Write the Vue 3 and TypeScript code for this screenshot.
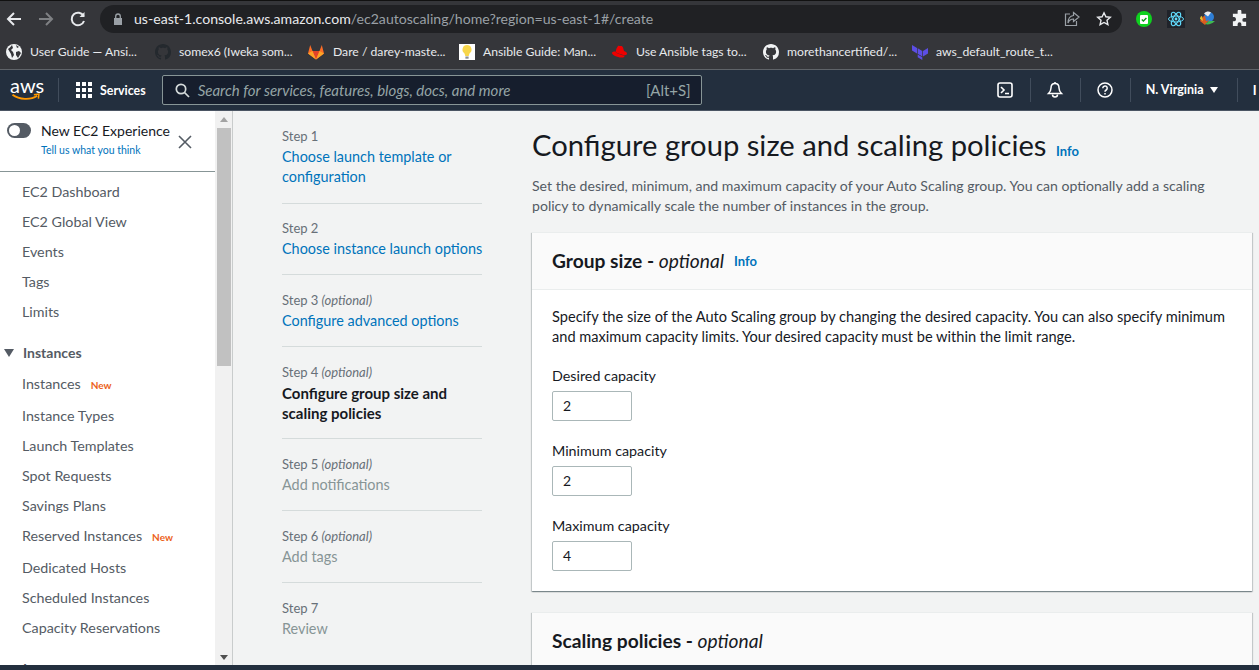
<script setup lang="ts">
interface NavItem {
  label: string
  isNew?: boolean
}

interface Step {
  step: string
  optional?: boolean
  lines: string[]
  state: 'link' | 'current' | 'disabled'
}

interface Field {
  label: string
  value: string
}

const bookmarks = [
  { icon: 'globe', label: 'User Guide — Ansi...', width: 149 },
  { icon: 'github-dark', label: 'somex6 (Iweka som...', width: 152 },
  { icon: 'gitlab', label: 'Dare / darey-maste...', width: 152 },
  { icon: 'bulb', label: 'Ansible Guide: Man...', width: 153 },
  { icon: 'redhat', label: 'Use Ansible tags to...', width: 151 },
  { icon: 'github', label: 'morethancertified/...', width: 149 },
  { icon: 'terraform', label: 'aws_default_route_t...', width: 150 },
]

const topNav: NavItem[] = [
  { label: 'EC2 Dashboard' },
  { label: 'EC2 Global View' },
  { label: 'Events' },
  { label: 'Tags' },
  { label: 'Limits' },
]

const instanceNav: NavItem[] = [
  { label: 'Instances', isNew: true },
  { label: 'Instance Types' },
  { label: 'Launch Templates' },
  { label: 'Spot Requests' },
  { label: 'Savings Plans' },
  { label: 'Reserved Instances', isNew: true },
  { label: 'Dedicated Hosts' },
  { label: 'Scheduled Instances' },
  { label: 'Capacity Reservations' },
]

const steps: Step[] = [
  { step: 'Step 1', lines: ['Choose launch template or', 'configuration'], state: 'link' },
  { step: 'Step 2', lines: ['Choose instance launch options'], state: 'link' },
  { step: 'Step 3', optional: true, lines: ['Configure advanced options'], state: 'link' },
  { step: 'Step 4', optional: true, lines: ['Configure group size and', 'scaling policies'], state: 'current' },
  { step: 'Step 5', optional: true, lines: ['Add notifications'], state: 'disabled' },
  { step: 'Step 6', optional: true, lines: ['Add tags'], state: 'disabled' },
  { step: 'Step 7', lines: ['Review'], state: 'disabled' },
]

const fields: Field[] = [
  { label: 'Desired capacity', value: '2' },
  { label: 'Minimum capacity', value: '2' },
  { label: 'Maximum capacity', value: '4' },
]
</script>

<template>
  <div class="page">
    <div class="chrome-top">
      <svg class="tb-icon" width="18" height="18" viewBox="0 0 18 18" fill="none" stroke="#e8eaed" stroke-width="2"><path d="M16 9H3M9 3 3 9l6 6" /></svg>
      <svg class="tb-icon" width="18" height="18" viewBox="0 0 18 18" fill="none" stroke="#7f8184" stroke-width="2"><path d="M2 9h13M9 3l6 6-6 6" /></svg>
      <svg class="tb-icon" width="18" height="18" viewBox="0 0 18 18" fill="none" stroke="#e8eaed" stroke-width="2"><path d="M14.6 6A6.3 6.3 0 1 0 15 11" /><path d="M15.5 2v5h-5" fill="#e8eaed" stroke="none" /></svg>
      <div class="omnibox">
        <svg width="10" height="12" viewBox="0 0 10 12" class="lock"><path d="M1 5h8v7H1z" fill="#9aa0a6" /><path d="M2.7 5V3.3a2.3 2.3 0 0 1 4.6 0V5" fill="none" stroke="#9aa0a6" stroke-width="1.3" /></svg>
        <span class="url"><b>us-east-1.console.aws.amazon.com</b>/ec2autoscaling/home?region=us-east-1#/create</span>
        <svg class="share" width="16" height="16" viewBox="0 0 16 16" fill="none" stroke="#9aa0a6" stroke-width="1.2"><path d="M6 3H1.5v11.5h11V10" /><path d="M9.5 1.5 15 6l-5.500 4.500V8C7 8 5 9.500 4 12c0-4 2-7 5.500-7.500z" /></svg>
        <svg width="16" height="16" viewBox="0 0 16 16" fill="none" stroke="#e8eaed" stroke-width="1.4"><path d="m8 1.800 1.900 4 4.400.5-3.300 3 .9 4.400L8 11.500l-3.900 2.200.9-4.400-3.300-3 4.400-.5z" /></svg>
      </div>
      <div class="exts">
        <svg width="18" height="18" viewBox="0 0 18 18"><circle cx="9" cy="9" r="8" fill="#0fd11f" /><rect x="5" y="5" width="8" height="9" rx="1" fill="#fff" /><path d="M6.800 9.500 8.400 11l3-3" stroke="#0a9c18" stroke-width="1.400" fill="none" /></svg>
        <svg width="18" height="18" viewBox="0 0 18 18" fill="none" stroke="#61dafb" stroke-width="1"><rect width="18" height="18" fill="#20232a" stroke="none" /><ellipse cx="9" cy="9" rx="7.500" ry="3" /><ellipse cx="9" cy="9" rx="7.500" ry="3" transform="rotate(60 9 9)" /><ellipse cx="9" cy="9" rx="7.500" ry="3" transform="rotate(120 9 9)" /><circle cx="9" cy="9" r="1.400" fill="#61dafb" stroke="none" /></svg>
        <svg width="18" height="18" viewBox="0 0 18 18"><circle cx="10" cy="7" r="5" fill="#2f7fd6" /><path d="M5 3.500a5 5 0 0 1 7-1l-3 4z" fill="#e8eaed" /><path d="M1 11c2-3 3-5 5-5l1 5 3-1-4 5z" fill="#dc5b20" /><path d="M6 14c3 1 7 0 10-3l-6 0z" fill="#3fb950" /><path d="M1 9c0-2 1-3 2-3l1 5z" fill="#e6c229" /></svg>
        <svg width="17" height="17" viewBox="0 0 18 18"><path d="M7 1.500a2 2 0 0 1 4 0V4h5v4.500h-2a2 2 0 0 0 0 4h2V17h-5v-2a2 2 0 0 0-4 0v2H2v-5h1.500a2.300 2.300 0 0 0 0-4.500H2V4h5z" fill="#f1f3f4" /></svg>
      </div>
    </div>

    <div class="bookmarks">
      <div v-for="b in bookmarks" :key="b.label" class="bookmark" :style="{ width: b.width + 'px' }">
        <svg v-if="b.icon === 'globe'" width="16" height="16" viewBox="0 0 16 16"><circle cx="8" cy="8" r="8" fill="#f1f3f4" /><path d="M2 5c2-1 3-3 4-4l1 3-2 2 2 2 1 3-2 3-1-4zM10 8l3-1 2 2-3 5-2-3zM10 1l3 2-2 1z" fill="#35363a" /></svg>
        <svg v-else-if="b.icon === 'github-dark' || b.icon === 'github'" width="16" height="16" viewBox="0 0 16 16"><path :fill="b.icon === 'github' ? '#f1f3f4' : '#24292e'" fill-rule="evenodd" d="M8 0C3.580 0 0 3.580 0 8c0 3.540 2.290 6.530 5.470 7.590.4.070.55-.17.55-.38 0-.19-.010-.82-.010-1.490-2.010.37-2.530-.49-2.690-.94-.090-.23-.48-.94-.82-1.130-.28-.15-.68-.52-.010-.53.63-.010 1.080.58 1.230.82.720 1.210 1.870.87 2.330.66.070-.52.28-.87.51-1.070-1.780-.2-3.640-.89-3.640-3.950 0-.87.310-1.590.82-2.150-.080-.2-.36-1.020.080-2.120 0 0 .67-.21 2.200.82.640-.18 1.320-.27 2-.27s1.360.090 2 .27c1.530-1.040 2.200-.82 2.200-.82.440 1.100.160 1.920.080 2.120.51.560.82 1.270.82 2.150 0 3.070-1.870 3.750-3.650 3.950.290.25.540.73.540 1.480 0 1.070-.010 1.930-.010 2.200 0 .21.150.46.550.38A8.010 8.010 0 0 0 16 8c0-4.420-3.580-8-8-8z" /></svg>
        <svg v-else-if="b.icon === 'gitlab'" width="18" height="16" viewBox="0 0 18 16"><path d="M9 15.500 1 9.500 3.200 1l2.300 6h7L14.800 1 17 9.500z" fill="#fc6d26" /><path d="M9 15.500 5.500 7h7z" fill="#e24329" /><path d="M9 15.500 1 9.500 5.500 7zM9 15.500l8-6L12.500 7z" fill="#fca326" /></svg>
        <svg v-else-if="b.icon === 'bulb'" width="16" height="16" viewBox="0 0 16 16"><rect width="16" height="16" fill="#fff" /><path d="M8 1a4.600 4.600 0 0 0-2.500 8.400L6.300 12h3.400l.8-2.600A4.600 4.600 0 0 0 8 1z" fill="#f7d64a" /><rect x="6.400" y="12.500" width="3.200" height="2.200" fill="#8b8f94" /></svg>
        <svg v-else-if="b.icon === 'redhat'" width="16" height="16" viewBox="0 0 16 16"><path d="M4.500 4.500 6 2c1-.6 1.500 0 2.500 0 1.200-.4 2 .2 2.500 1.500l1 3.500c1.500.6 3 1.500 3 2.700 0 1.300-1.800 1.800-4 1.200C8.500 10.200 5.500 9.500 3.500 8z" fill="#e00" /><path d="M3 7.500C1.500 7.500 0 8 0 9c0 2 5 4.500 9.500 4.500 2.500 0 3.300-1 3-1.800C8.500 11 5 9.500 3 7.500z" fill="#e00" /></svg>
        <svg v-else width="16" height="16" viewBox="0 0 16 16"><path d="M0 1l5 3v5.500L0 6.500zM5.700 4.300 10.300 7v5.500L5.700 9.800zM11 7l5-3v5.500l-5 3zM5.700 10.500l4.600 2.700V16l-4.600-2.700z" fill="#5c4ee5" /></svg>
        <span>{{ b.label }}</span>
      </div>
    </div>

    <header class="aws-nav">
      <div class="aws-logo">
        <span class="aws-word">aws</span>
        <svg width="32" height="9" viewBox="0 0 26 8" fill="none"><path d="M1 1.500C7 6 17 6.500 23 2.500" stroke="#ff9900" stroke-width="1.600" /><path d="M20 1.500 24.500 1 24 5" stroke="#ff9900" stroke-width="1.300" /></svg>
      </div>
      <div class="services">
        <svg width="16" height="16" viewBox="0 0 16 16" fill="#fff"><rect width="4" height="4" /><rect x="6" width="4" height="4" /><rect x="12" width="4" height="4" /><rect y="6" width="4" height="4" /><rect x="6" y="6" width="4" height="4" /><rect x="12" y="6" width="4" height="4" /><rect y="12" width="4" height="4" /><rect x="6" y="12" width="4" height="4" /><rect x="12" y="12" width="4" height="4" /></svg>
        <span>Services</span>
      </div>
      <div class="search">
        <svg width="15" height="15" viewBox="0 0 15 15" fill="none" stroke="#d5dbdb" stroke-width="1.700"><circle cx="6" cy="6" r="4.700" /><path d="m9.500 9.500 4.500 4.500" /></svg>
        <span class="search-text">Search for services, features, blogs, docs, and more</span>
        <span class="search-key">[Alt+S]</span>
      </div>
      <div class="nav-right">
        <div class="nav-btn">
          <svg width="16" height="16" viewBox="0 0 16 16" fill="none" stroke="#fff" stroke-width="1.600"><rect x="1" y="1" width="14" height="14" rx="2" /><path d="m4 5 3 3-3 3M8 11.500h4" /></svg>
        </div>
        <div class="nav-btn">
          <svg width="18" height="18" viewBox="0 0 18 18" fill="none" stroke="#fff" stroke-width="1.500"><path d="M9 2.500c-3 0-4 2-4 4.500 0 2.500-1 4-2.500 5.500h13C14 11 13 9.500 13 7c0-2.500-1-4.500-4-4.500z" /><path d="M9 1v1.500M6.500 13.500a2.500 2.500 0 0 0 5 0" /></svg>
        </div>
        <div class="nav-btn">
          <svg width="16" height="16" viewBox="0 0 16 16" fill="none" stroke="#fff" stroke-width="1.500"><circle cx="8" cy="8" r="7" /><path d="M5.800 6.200a2.200 2.200 0 1 1 3.400 1.800c-.8.500-1.200 1-1.200 1.800" /><path d="M8 11v1.500" /></svg>
        </div>
        <div class="region">N. Virginia <i class="caret-white"></i></div>
        <div class="user">I</div>
      </div>
    </header>

    <div class="body">
      <aside class="sidebar">
        <div class="side-scroll">
          <div class="experience">
            <span class="toggle"><i></i></span>
            <div class="exp-text">
              <div class="exp-title">New EC2 Experience</div>
              <div class="exp-link">Tell us what you think</div>
            </div>
            <svg class="exp-close" width="14" height="14" viewBox="0 0 14 14" fill="none" stroke="#545b64" stroke-width="1.600"><path d="m1 1 12 12M13 1 1 13" /></svg>
          </div>
          <nav class="side-nav">
            <div class="nav-group">
              <div v-for="n in topNav" :key="n.label" class="nav-item">{{ n.label }}</div>
            </div>
            <div class="nav-head"><i class="caret-dark"></i>Instances</div>
            <div v-for="n in instanceNav" :key="n.label" :class="['nav-item', { tall: n.isNew }]">
              {{ n.label }}<span v-if="n.isNew" class="new">New</span>
            </div>
            <div class="nav-head cut"><i class="caret-dark"></i>Images</div>
          </nav>
        </div>
        <div class="scrollbar">
          <i class="sb-up"></i>
          <div class="sb-thumb"></div>
          <i class="sb-down"></i>
        </div>
      </aside>

      <main class="content">
        <ol class="steps">
          <li v-for="s in steps" :key="s.step" class="step">
            <div class="step-no">{{ s.step }}<em v-if="s.optional"> (optional)</em></div>
            <div :class="['step-title', s.state]">
              <div v-for="line in s.lines" :key="line">{{ line }}</div>
            </div>
          </li>
        </ol>

        <section class="form">
          <h1>Configure group size and scaling policies <a class="info big">Info</a></h1>
          <p class="desc">Set the desired, minimum, and maximum capacity of your Auto Scaling group. You can optionally add a scaling<br>policy to dynamically scale the number of instances in the group.</p>

          <div class="card">
            <div class="card-head">
              <h2>Group size - <em>optional</em></h2>
              <a class="info">Info</a>
            </div>
            <div class="card-body">
              <p>Specify the size of the Auto Scaling group by changing the desired capacity. You can also specify minimum<br>and maximum capacity limits. Your desired capacity must be within the limit range.</p>
              <div v-for="f in fields" :key="f.label" class="field">
                <label>{{ f.label }}</label>
                <div class="input">{{ f.value }}</div>
              </div>
            </div>
          </div>

          <div class="card second">
            <div class="card-head">
              <h2>Scaling policies - <em>optional</em></h2>
            </div>
          </div>
        </section>
      </main>
    </div>
    <div class="taskbar"></div>
  </div>
</template>

<style>
html, body {
  margin: 0;
  overflow: hidden;
}
</style>

<style scoped>
.page {
  width: 1259px;
  height: 670px;
  overflow: hidden;
  display: flex;
  flex-direction: column;
  font-family: "Lato", "Open Sans", sans-serif;
  font-size: 14px;
  background: #f2f3f3;
}

.chrome-top {
  height: 36px;
  flex: none;
  box-sizing: border-box;
  border-top: 1px solid #111;
  background: #35363a;
  display: flex;
  align-items: center;
  padding: 0 0 0 5px;
  color: #e8eaed;
}

.tb-icon {
  margin-right: 14px;
  flex: none;
}

.tb-icon:nth-child(3) {
  margin-right: 13px;
}

.omnibox {
  width: 1022px;
  height: 28px;
  flex: none;
  border-radius: 14px;
  background: #202124;
  display: flex;
  align-items: center;
  padding: 0 10px 0 13px;
  box-sizing: border-box;
  font-size: 14.100px;
}

.lock {
  margin-right: 11px;
}

.url {
  flex: 1;
  color: #9aa0a6;
  white-space: nowrap;
}

.url b {
  font-weight: 400;
  color: #e8eaed;
}

.share {
  margin-right: 16px;
}

.exts {
  display: flex;
  align-items: center;
  gap: 14px;
  margin-left: 13px;
}

.bookmarks {
  height: 31px;
  padding-bottom: 2px;
  flex: none;
  background: #35363a;
  border-bottom: 1px solid #5f6368;
  display: flex;
  align-items: center;
  padding-left: 6px;
  color: #e8eaed;
  font-size: 12.200px;
  white-space: nowrap;
}

.bookmark {
  display: flex;
  align-items: center;
  gap: 8px;
  flex: none;
}

.aws-nav {
  height: 41px;
  flex: none;
  box-sizing: border-box;
  border-bottom: 1px solid #4b5563;
  background: #232f3e;
  display: flex;
  align-items: center;
  color: #fff;
}

.aws-logo {
  width: 58px;
  padding-left: 10px;
  height: 28px;
  display: flex;
  flex-direction: column;
  align-items: flex-start;
  box-sizing: border-box;
  flex: none;
}

.aws-word {
  font-size: 20px;
  line-height: 18px;
}

.aws-logo svg {
  margin-top: -1px;
}

.services {
  height: 24px;
  border-left: 1px solid #414d5c;
  padding: 0 16px 0 17px;
  display: flex;
  align-items: center;
  gap: 8px;
  font-size: 12.400px;
  font-weight: 700;
  flex: none;
}

.search {
  width: 540px;
  height: 30px;
  box-sizing: border-box;
  flex: none;
  border: 1px solid #879596;
  border-radius: 2px;
  background: #161e2d;
  display: flex;
  align-items: center;
  padding: 0 10px 0 12px;
  color: #95a5a6;
  font-size: 15px;
}

.search-text {
  flex: 1;
  margin-left: 8px;
  font-style: italic;
}

.nav-right {
  display: flex;
  align-items: center;
  flex: 1;
  padding-left: 287px;
  white-space: nowrap;
}

.nav-btn {
  width: 50px;
  height: 24px;
  display: flex;
  align-items: center;
  justify-content: center;
  margin-left: -8px;
  margin-right: 8px;
  border-right: 1px solid #414d5c;
  box-sizing: border-box;
  flex: none;
}

.region {
  font-size: 12.500px;
  font-weight: 700;
  width: 99px;
  padding-left: 7px;
  box-sizing: border-box;
  height: 24px;
  line-height: 24px;
  border-right: 1px solid #414d5c;
  flex: none;
}

.caret-white {
  display: inline-block;
  border: 4px solid transparent;
  border-top: 6px solid #fff;
  border-bottom: 0;
  margin-left: 3px;
  vertical-align: 1px;
}

.user {
  padding-left: 15px;
  font-size: 13px;
  font-weight: 700;
}

.body {
  flex: 1;
  min-height: 0;
  display: flex;
}

.sidebar {
  width: 233px;
  flex: none;
  display: flex;
  box-sizing: border-box;
  border-right: 1px solid #c9cccc;
  background: #fff;
  overflow: hidden;
}

.side-scroll {
  width: 215px;
  flex: none;
}

.experience {
  height: 61px;
  box-sizing: border-box;
  border-bottom: 1px solid #879596;
  display: flex;
  padding: 10px 0 0 7px;
}

.toggle {
  width: 24px;
  height: 15px;
  border-radius: 8px;
  background: #545b64;
  position: relative;
  flex: none;
  margin-top: 2px;
}

.toggle i {
  position: absolute;
  left: 2px;
  top: 2px;
  width: 11px;
  height: 11px;
  border-radius: 50%;
  background: #fff;
}

.exp-text {
  margin-left: 10px;
  white-space: nowrap;
}

.exp-title {
  font-size: 14px;
  line-height: 20px;
  color: #16191f;
}

.exp-link {
  font-size: 10.500px;
  line-height: 14px;
  margin-top: 2px;
  color: #0073bb;
}

.exp-close {
  margin: 14px 0 0 8px;
  flex: none;
}

.side-nav {
  padding-top: 5px;
  font-size: 14.300px;
  color: #545b64;
  white-space: nowrap;
}

.nav-group {
  margin-bottom: 10px;
}

.nav-item {
  height: 30px;
  line-height: 30px;
  padding-left: 22px;
}

.nav-item.tall {
  height: 32px;
}

.new {
  color: #ec5f1a;
  font-size: 10px;
  font-weight: 700;
  margin-left: 10px;
}

.nav-head {
  height: 32px;
  line-height: 32px;
  font-size: 14px;
  font-weight: 700;
  display: flex;
  align-items: center;
}

.nav-head.cut {
  margin-top: 10px;
}

.caret-dark {
  border: 5px solid transparent;
  border-top: 8px solid #545b64;
  border-bottom: 0;
  margin: 0 9px 0 4px;
}

.scrollbar {
  width: 17px;
  flex: none;
  background: #f1f1f1;
  display: flex;
  flex-direction: column;
  align-items: center;
}

.sb-up {
  border: 4px solid transparent;
  border-top: 0;
  border-bottom: 5px solid #a3a3a3;
  margin: 6px 0;
}

.sb-thumb {
  width: 14px;
  height: 238px;
  background: #c1c1c1;
}

.sb-down {
  margin-top: auto;
  margin-bottom: 5px;
  border: 4px solid transparent;
  border-bottom: 0;
  border-top: 5px solid #505050;
}

.content {
  flex: 1;
  min-width: 0;
  display: flex;
  padding: 0 7px 0 49px;
  overflow: hidden;
  color: #16191f;
}

.steps {
  width: 200px;
  flex: none;
  margin: 0;
  padding: 15px 0 0;
  list-style: none;
}

.step {
  box-sizing: border-box;
  padding: 1px 0 15px;
  border-bottom: 1px solid #d5dbdb;
  margin-bottom: 15px;
}

.step:first-child {
  padding-bottom: 16px;
  margin-bottom: 14px;
}

.step:last-child {
  border-bottom: 0;
}

.step-no {
  font-size: 13px;
  line-height: 18px;
  color: #687078;
}

.step-title {
  margin-top: 2px;
  font-size: 14.400px;
  line-height: 20px;
  white-space: nowrap;
}

.step-title.link {
  color: #0073bb;
}

.step-title.current {
  font-weight: 700;
  font-size: 15px;
  color: #16191f;
}

.step-title.disabled {
  color: #879596;
}

.form {
  width: 720px;
  margin-left: 50px;
  flex: none;
}

h1 {
  margin: 0;
  padding-top: 16px;
  font-size: 29.200px;
  font-weight: 400;
  line-height: 36px;
  white-space: nowrap;
}

.info {
  color: #0073bb;
  font-size: 13px;
  font-weight: 700;
}

.info.big {
  margin-left: 2px;
}

.desc {
  margin: 7px 0 16px;
  font-size: 14.100px;
  color: #545b64;
  line-height: 20px;
}

.card {
  background: #fff;
  box-shadow: 0 1px 1px 0 rgba(0, 28, 36, 0.3), 1px 1px 1px 0 rgba(0, 28, 36, 0.15), -1px 1px 1px 0 rgba(0, 28, 36, 0.15);
  border-top: 1px solid #eaeded;
}

.card.second {
  margin-top: 21px;
}

.card-head {
  height: 57px;
  box-sizing: border-box;
  background: #fafafa;
  border-bottom: 1px solid #eaeded;
  padding: 0 20px;
  display: flex;
  align-items: center;
  gap: 10px;
}

h2 {
  margin: 0;
  font-size: 19.200px;
  font-weight: 700;
  line-height: 24px;
}

h2 em {
  font-weight: 400;
}

.card-body {
  padding: 17px 20px 20px;
}

.card-body p {
  margin: 0 0 -1px;
  font-size: 14.600px;
  line-height: 20px;
  white-space: nowrap;
  color: #16191f;
}

.field {
  padding-top: 20px;
}

.field label {
  display: block;
  font-size: 14.300px;
  line-height: 20px;
  margin-bottom: 5px;
  color: #16191f;
}

.input {
  width: 80px;
  height: 30px;
  box-sizing: border-box;
  border: 1px solid #aab7b8;
  border-radius: 2px;
  padding-left: 10px;
  line-height: 28px;
  background: #fff;
}

.taskbar {
  height: 5px;
  flex: none;
  background: #232f3e;
}
</style>
